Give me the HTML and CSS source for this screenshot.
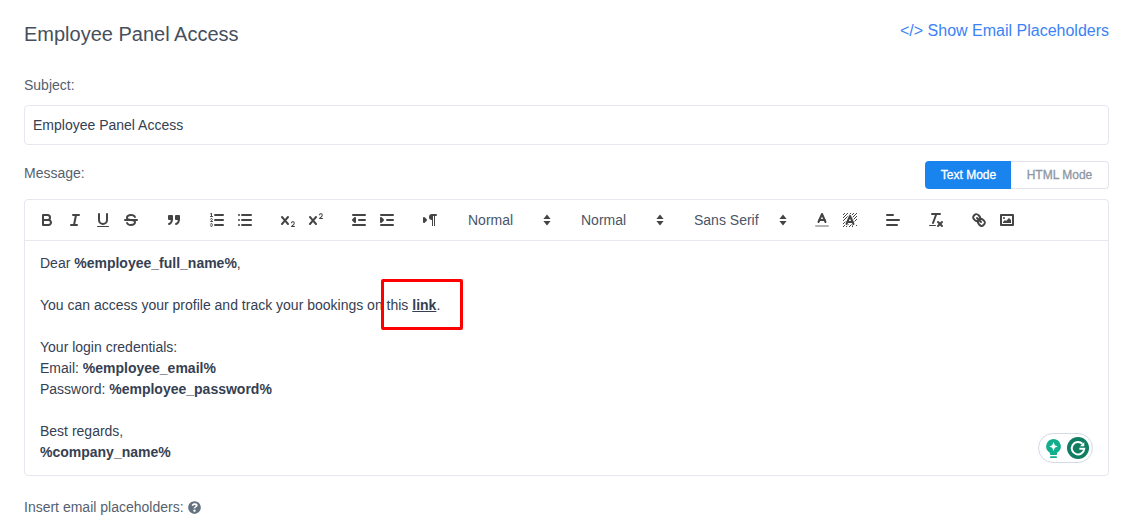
FILE: index.html
```html
<!DOCTYPE html>
<html lang="en">
<head>
<meta charset="utf-8">
<title>Employee Panel Access</title>
<link rel="stylesheet" href="styles.css">
</head>
<body>
<main class="page">
  <header class="head">
    <h1 class="title">Employee Panel Access</h1>
    <a class="show-link" href="#">&lt;/&gt; Show Email Placeholders</a>
  </header>

  <label class="label subject-label" for="subject">Subject:</label>
  <input class="input" id="subject" type="text" value="Employee Panel Access">

  <div class="message-row">
    <span class="label">Message:</span>
    <div class="modes">
      <button class="mode mode-on" type="button">Text Mode</button>
      <button class="mode" type="button">HTML Mode</button>
    </div>
  </div>

  <section class="editor">
    <div class="toolbar">
      <span class="group">
        <button class="tb" type="button" aria-label="Bold"><svg viewBox="0 0 18 18"><path class="s" d="M5,4H9.5A2.5,2.5,0,0,1,12,6.5v0A2.5,2.5,0,0,1,9.5,9H5V4Z"/><path class="s" d="M5,9h5.5A2.5,2.5,0,0,1,13,11.5v0A2.5,2.5,0,0,1,10.5,14H5V9Z"/></svg></button>
        <button class="tb" type="button" aria-label="Italic"><svg viewBox="0 0 18 18"><line class="s" x1="7" x2="13" y1="4" y2="4"/><line class="s" x1="5" x2="11" y1="14" y2="14"/><line class="s" x1="8" x2="10" y1="14" y2="4"/></svg></button>
        <button class="tb" type="button" aria-label="Underline"><svg viewBox="0 0 18 18"><path class="s" d="M5,3V9a4.012,4.012,0,0,0,4,4H9a4.012,4.012,0,0,0,4-4V3"/><rect class="f" height="1" rx=".5" ry=".5" width="12" x="3" y="15"/></svg></button>
        <button class="tb" type="button" aria-label="Strike"><svg viewBox="0 0 18 18"><line class="s" x1="3" x2="15" y1="9" y2="9"/><path class="f" d="M9.007,8C6.542,7.791,6,7.519,6,6.5,6,5.792,7.283,5,9,5c1.571,0,2.765.679,2.969,1.309a1,1,0,0,0,1.9-.617C13.356,4.106,11.354,3,9,3,6.2,3,4,4.538,4,6.5a3.2,3.2,0,0,0,.5,1.843Z"/><path class="f" d="M8.984,10C11.457,10.208,12,10.479,12,11.5c0,.708-1.283,1.5-3,1.5-1.571,0-2.765-.679-2.969-1.309a1,1,0,1,0-1.9.617C4.644,13.894,6.646,15,9,15c2.8,0,5-1.538,5-3.5a3.2,3.2,0,0,0-.5-1.843Z"/></svg></button>
      </span>
      <span class="group">
        <button class="tb" type="button" aria-label="Blockquote"><svg viewBox="0 0 18 18"><rect class="s f" height="3" width="3" x="4" y="5"/><rect class="s f" height="3" width="3" x="11" y="5"/><path class="s nofill" d="M7,8c0,4.031-3,5-3,5"/><path class="s nofill" d="M14,8c0,4.031-3,5-3,5"/></svg></button>
      </span>
      <span class="group">
        <button class="tb" type="button" aria-label="Ordered list"><svg viewBox="0 0 18 18"><line class="s" x1="7" x2="15" y1="4" y2="4"/><line class="s" x1="7" x2="15" y1="9" y2="9"/><line class="s" x1="7" x2="15" y1="14" y2="14"/><line class="s thin" x1="2.5" x2="4.5" y1="5.5" y2="5.5"/><path class="f" d="M3.5,6A0.5,0.5,0,0,1,3,5.5V3.085l-0.276.138A0.5,0.5,0,0,1,2.053,3c-0.124-.247-0.023-0.324.224-0.447l1-.5A0.5,0.5,0,0,1,4,2.5v3A0.5,0.5,0,0,1,3.5,6Z"/><path class="s thin" d="M4.5,10.5h-2c0-.234,1.85-1.076,1.85-2.234A0.959,0.959,0,0,0,2.5,8.156"/><path class="s thin" d="M2.5,14.846a0.959,0.959,0,0,0,1.85-.109A0.7,0.7,0,0,0,3.75,14a0.688,0.688,0,0,0,.6-0.736,0.959,0.959,0,0,0-1.85-.109"/></svg></button>
        <button class="tb" type="button" aria-label="Bullet list"><svg viewBox="0 0 18 18"><line class="s" x1="6" x2="15" y1="4" y2="4"/><line class="s" x1="6" x2="15" y1="9" y2="9"/><line class="s" x1="6" x2="15" y1="14" y2="14"/><line class="s" x1="3" x2="3" y1="4" y2="4"/><line class="s" x1="3" x2="3" y1="9" y2="9"/><line class="s" x1="3" x2="3" y1="14" y2="14"/></svg></button>
      </span>
      <span class="group">
        <button class="tb" type="button" aria-label="Subscript"><svg viewBox="0 0 18 18"><path class="f" d="M15.5,15H13.861a3.858,3.858,0,0,0,1.914-2.975,1.8,1.8,0,0,0-1.6-1.751A1.921,1.921,0,0,0,12.021,11.7a0.50013,0.50013,0,1,0,.957.291h0a0.914,0.914,0,0,1,1.053-.725,0.81,0.81,0,0,1,.744.762c0,1.076-1.16971,1.86982-1.93971,2.43082A1.45639,1.45639,0,0,0,12,15.5a0.5,0.5,0,0,0,.5.5h3A0.5,0.5,0,0,0,15.5,15Z"/><path class="f" d="M9.65,5.241a1,1,0,0,0-1.409.108L6,7.964,3.759,5.349A1,1,0,0,0,2.192,6.59178Q2.21,6.6,2.241,6.651L4.684,9.5,2.241,12.35A1,1,0,0,0,3.71,13.70722q0.02-.02.049-0.049L6,11.036l2.241,2.615a1,1,0,0,0,1.567-1.24277Q9.79,12.4,9.759,12.35L7.316,9.5,9.759,6.651A1,1,0,0,0,9.65,5.241Z"/></svg></button>
        <button class="tb" type="button" aria-label="Superscript"><svg viewBox="0 0 18 18"><path class="f" d="M15.5,7H13.861a4.015,4.015,0,0,0,1.914-2.975,1.8,1.8,0,0,0-1.6-1.751A1.922,1.922,0,0,0,12.021,3.7a0.5,0.5,0,1,0,.957.291,0.917,0.917,0,0,1,1.053-.725,0.81,0.81,0,0,1,.744.762c0,1.077-1.164,1.925-1.934,2.486A1.423,1.423,0,0,0,12,7.5a0.5,0.5,0,0,0,.5.5h3A0.5,0.5,0,0,0,15.5,7Z"/><path class="f" d="M9.65,5.241a1,1,0,0,0-1.409.108L6,7.964,3.759,5.349A1,1,0,0,0,2.192,6.59178Q2.21,6.6,2.241,6.651L4.684,9.5,2.241,12.35A1,1,0,0,0,3.71,13.70722q0.02-.02.049-0.049L6,11.036l2.241,2.615a1,1,0,0,0,1.567-1.24277Q9.79,12.4,9.759,12.35L7.316,9.5,9.759,6.651A1,1,0,0,0,9.65,5.241Z"/></svg></button>
      </span>
      <span class="group">
        <button class="tb" type="button" aria-label="Outdent"><svg viewBox="0 0 18 18"><line class="s" x1="3" x2="15" y1="14" y2="14"/><line class="s" x1="3" x2="15" y1="4" y2="4"/><line class="s" x1="9" x2="15" y1="9" y2="9"/><polyline class="s f" points="5 7 5 11 3 9 5 7"/></svg></button>
        <button class="tb" type="button" aria-label="Indent"><svg viewBox="0 0 18 18"><line class="s" x1="3" x2="15" y1="14" y2="14"/><line class="s" x1="3" x2="15" y1="4" y2="4"/><line class="s" x1="9" x2="15" y1="9" y2="9"/><polyline class="s f" points="3 7 3 11 5 9 3 7"/></svg></button>
      </span>
      <span class="group">
        <button class="tb" type="button" aria-label="Direction"><svg viewBox="0 0 18 18"><polygon class="s f" points="3 11 5 9 3 7 3 11"/><line class="s" x1="15" x2="11" y1="4" y2="4"/><path class="f" d="M11,3a3,3,0,0,0,0,6h1V3H11Z"/><rect class="f" height="11" width="1" x="11" y="4"/><rect class="f" height="11" width="1" x="13" y="4"/></svg></button>
      </span>
      <span class="group">
        <span class="picker picker-size"><span>Normal</span><svg class="sort" viewBox="0 0 8 12"><path d="M4 .5 7.6 5H.4ZM4 11.500 .4 7H7.6Z"/></svg></span>
      </span>
      <span class="group">
        <span class="picker picker-size"><span>Normal</span><svg class="sort" viewBox="0 0 8 12"><path d="M4 .5 7.6 5H.4ZM4 11.500 .4 7H7.6Z"/></svg></span>
      </span>
      <span class="group">
        <span class="picker picker-font"><span>Sans Serif</span><svg class="sort" viewBox="0 0 8 12"><path d="M4 .5 7.6 5H.4ZM4 11.500 .4 7H7.6Z"/></svg></span>
      </span>
      <span class="group">
        <button class="tb" type="button" aria-label="Color"><svg viewBox="0 0 18 18"><line class="s label-line" x1="3" x2="15" y1="15" y2="15"/><polyline class="s" points="5.5 11 9 3 12.5 11"/><line class="s" x1="11.63" x2="6.38" y1="9" y2="9"/></svg></button>
        <button class="tb" type="button" aria-label="Background"><svg viewBox="0 0 18 18"><path class="f" d="M2 3h1v1H2zM3 2h1v1H3zM6 2h1v1H6zM9 2h1v1H9zM12 2h1v1h-1zM15 2h1v1h-1zM5 3h1v1H5zM8 3h1v.3A2 2 0 0 0 8 3.3zM11 3h1v1h-1zM14 3h1v1h-1zM4 4h1v1H4zM7 4h.3L7 4.6zM10.7 4H11v.6zM13 4h1v1h-1zM3 5h1v1H3zM6 5h.8L6.4 6H6zM12 5h1v1h-1zM15 5h1v1h-1zM2 6h1v1H2zM5 6h1v1H5zM11.6 6H12v.9zM14 6h1v1h-1zM4 7h1v1H4zM13 7h1v1h-1zM3 8h1v1H3zM12.5 8H13v1h-.1zM15 8h1v1h-1zM2 9h1v1H2zM14 9h1v1h-1zM4 10h.6L4.2 11H4zM13.4 10H14v1h-.2zM3 11h1v.4L3.8 12H3zM2 12h1v1H2zM3 14h.8L4 14.3V15H3zM7.7 13H8v1H7.2zM10 13h.3l.5 1H10zM6 14.9a2 2 0 0 0 1-.6V15H6zM9 14h1v1H9zM11.2 14h1.1L11 15zM2 15h1v1H2zM5 15h1v1H5zM8 15h1v1H8zM11 15h1v1h-1zM15 14h1v1h-1z"/><polyline class="s" points="5.5 13 9 5 12.5 13"/><line class="s" x1="11.63" x2="6.38" y1="11" y2="11"/></svg></button>
      </span>
      <span class="group">
        <button class="tb" type="button" aria-label="Align"><svg viewBox="0 0 18 18"><line class="s" x1="3" x2="15" y1="9" y2="9"/><line class="s" x1="3" x2="13" y1="14" y2="14"/><line class="s" x1="3" x2="9" y1="4" y2="4"/></svg></button>
      </span>
      <span class="group">
        <button class="tb" type="button" aria-label="Clean"><svg viewBox="0 0 18 18"><line class="s" x1="5" x2="13" y1="3" y2="3"/><line class="s" x1="6" x2="9.35" y1="12" y2="3"/><line class="s" x1="11" x2="15" y1="11" y2="15"/><line class="s" x1="15" x2="11" y1="11" y2="15"/><rect class="f" height="1" rx=".5" ry=".5" width="7" x="2" y="14"/></svg></button>
      </span>
      <span class="group">
        <button class="tb" type="button" aria-label="Link"><svg viewBox="0 0 18 18"><line class="s" x1="7" x2="11" y1="7" y2="11"/><path class="s" d="M8.9,4.577a3.476,3.476,0,0,1,.36,4.679A3.476,3.476,0,0,1,4.577,8.9C3.185,7.5,2.035,6.4,4.217,4.217S7.5,3.185,8.9,4.577Z"/><path class="s" d="M13.423,9.1a3.476,3.476,0,0,0-4.679-.36,3.476,3.476,0,0,0,.36,4.679c1.392,1.392,2.5,2.542,4.679.36S14.815,10.5,13.423,9.1Z"/></svg></button>
        <button class="tb" type="button" aria-label="Image"><svg viewBox="0 0 18 18"><rect class="s" height="10" width="12" x="3" y="4"/><circle class="f" cx="6" cy="7" r="1"/><polyline class="f" points="5 12 5 11 7 9 8 10 11 7 13 9 13 12 5 12"/></svg></button>
      </span>
    </div>
    <div class="content">
      <p>Dear <strong>%employee_full_name%</strong>,</p>
      <p><br></p>
      <p>You can access your profile and track your bookings on this <a class="bold-link" href="#">link</a>.</p>
      <p><br></p>
      <p>Your login credentials:</p>
      <p>Email: <strong>%employee_email%</strong></p>
      <p>Password: <strong>%employee_password%</strong></p>
      <p><br></p>
      <p>Best regards,</p>
      <p><strong>%company_name%</strong></p>
      <div class="highlight"></div>
      <div class="grammarly">
        <svg class="bulb" viewBox="0.6 0 14.8 19"><path d="M8 0a7.400 7.400 0 0 0-3.600 13.800V15a1 1 0 0 0 1 1h5.200a1 1 0 0 0 1-1v-1.200A7.400 7.400 0 0 0 8 0Z"/><rect x="4.500" y="17.300" width="7" height="1.700" rx=".85"/><path class="spark" d="M8 3 9.300 6.200 12.300 7.500 9.300 8.800 8 12 6.700 8.800 3.700 7.500 6.700 6.200Z"/></svg>
        <svg class="gee" viewBox="0 0 24 24"><circle cx="12" cy="12" r="12"/><path class="gee-g" d="M16.800 7.400A6.800 6.800 0 1 0 18.800 12.800H13.500"/><path class="gee-tip" d="M18.800 5.600V10.200H14.200Z"/></svg>
      </div>
    </div>
  </section>

  <div class="insert"><span class="label">Insert email placeholders:</span>
    <svg class="help" viewBox="0 0 512 512"><path d="M504 256c0 137-111 248-248 248S8 393 8 256 119 8 256 8s248 111 248 248zM262.700 90c-54.500 0-89.300 23-116.500 63.800-3.500 5.300-2.400 12.400 2.700 16.300l34.700 26.300c5.200 3.900 12.600 3 16.700-2.100 17.900-22.700 30.100-35.800 57.300-35.800 20.400 0 45.700 13.100 45.700 33 0 15-12.400 22.700-32.600 34-23.600 13.200-54.800 29.700-54.800 70.900V272c0 6.600 5.400 12 12 12h56c6.600 0 12-5.400 12-12v-1.300c0-28.600 83.500-29.800 83.500-107.100C379.400 105.400 319 90 262.700 90zM256 339c-25.500 0-46.200 20.700-46.200 46.200 0 25.500 20.700 46.200 46.200 46.200s46.200-20.700 46.200-46.200c0-25.500-20.700-46.200-46.200-46.200z"/></svg>
  </div>
</main>
</body>
</html>
```

FILE: styles.css
```css
* { box-sizing: border-box; }
html, body { margin: 0; height: 100%; overflow: hidden; background: #fff; }
body { font-family: "Liberation Sans", Arial, sans-serif; font-size: 14px; color: #354052; }

.page { padding: 0 14px 0 24px; }

.head { display: flex; justify-content: space-between; align-items: flex-start; height: 66px; padding-top: 21px; }
.title { margin: 0; font-size: 20px; font-weight: 400; line-height: 26px; color: #474f5c; }
.show-link { font-size: 16px; line-height: 18px; color: #3b82f6; text-decoration: none; margin-top: 1px; }

.label { color: #555f6e; font-size: 14px; line-height: 20px; }
.subject-label { display: block; margin-top: 9px; }

.input { display: block; width: 100%; height: 40px; margin-top: 10px; padding: 0 8px; border: 1px solid #e6e8ef; border-radius: 4px; font: 14px "Liberation Sans", Arial, sans-serif; color: #354052; background: #fff; }

.message-row { display: flex; justify-content: space-between; align-items: flex-start; height: 38px; margin-top: 16px; padding-top: 0; }
.message-row .label { margin-top: 2px; }

.modes { display: flex; height: 28px; }
.mode { height: 28px; width: 98px; padding: 0; border: 1px solid #e2e4ec; border-left: 0; border-radius: 0 4px 4px 0; background: #fff; color: #8e95a3; font: 12px "Liberation Sans", Arial, sans-serif; -webkit-text-stroke: .3px currentColor; }
.mode-on { width: 86px; padding-left: 1px; border: 0; border-radius: 4px 0 0 4px; background: #1a84ee; color: #fff; }

.editor { border: 1px solid #e6e8ef; border-radius: 4px; }
.toolbar { display: flex; align-items: center; height: 41px; padding: 0 8px; border-bottom: 1px solid #e6e8ef; }
.group { display: flex; margin-right: 15px; }
.tb { display: block; width: 28px; height: 24px; padding: 3px 5px; border: 0; background: none; }
.tb svg { display: block; width: 18px; height: 18px; }
.s { fill: none; stroke: #444; stroke-width: 2; stroke-linecap: round; stroke-linejoin: round; }
.f { fill: #444; }
.s.f { fill: #444; }
.thin { stroke-width: 1; }
.label-line { stroke: #b5b5b5; }

.picker { display: flex; align-items: center; justify-content: space-between; height: 24px; padding: 0 6px 0 9px; color: #4a5568; font-size: 14px; }
.picker-size { width: 98px; }
.picker-font { width: 108px; }
.sort { width: 8px; height: 12px; fill: #444; }

.content { position: relative; height: 234px; padding: 12px 15px; line-height: 21px; font-size: 14px; color: #354052; }
.content p { margin: 0; }
.content strong, .bold-link { font-weight: 700; }
.bold-link { color: #354052; }

.highlight { position: absolute; left: 356px; top: 38px; width: 82px; height: 51px; border: 3px solid #f00; border-radius: 2px; }

.grammarly { position: absolute; right: 15px; bottom: 12px; display: flex; align-items: center; gap: 6px; width: 55px; height: 30px; padding: 0 3px 0 7px; border: 1px solid #d5d9e5; border-radius: 15px; background: #fff; }
.bulb { width: 15px; height: 19px; fill: #11ae8d; }
.spark { fill: #fff; }
.gee { width: 22px; height: 22px; flex: none; }
.gee circle { fill: #0f7d62; }
.gee-g { fill: none; stroke: #fff; stroke-width: 2.2; }
.gee-tip { fill: #fff; }

.insert { display: flex; align-items: center; gap: 4px; margin-top: 21px; }
.help { width: 13px; height: 13px; fill: #667180; }
```
